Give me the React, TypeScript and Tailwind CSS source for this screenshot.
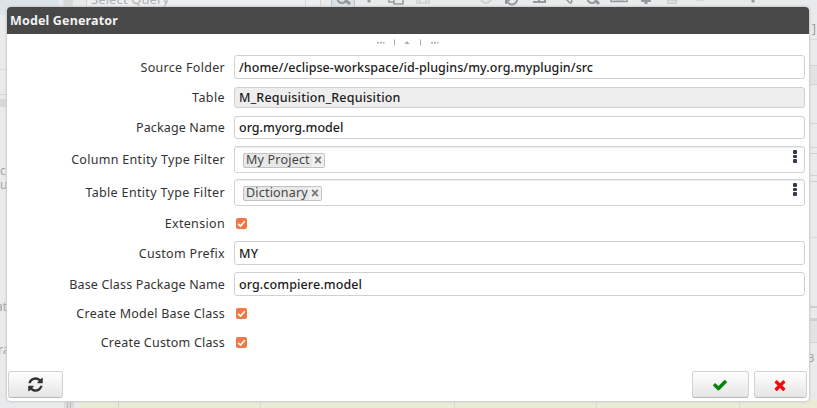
import type { ReactNode } from "react";

const REFRESH =
  "M1511 928q0 5-1 7-64 268-268 434.5t-478 166.5q-146 0-282.5-55t-243.5-157l-129 129q-19 19-45 19t-45-19-19-45v-448q0-26 19-45t45-19h448q26 0 45 19t19 45-19 45l-137 137q71 66 161 102t187 36q134 0 250-65t186-179q11-17 53-117 8-23 30-23h192q13 0 22.5 9.5t9.5 22.5zm25-800v448q0 26-19 45t-45 19h-448q-26 0-45-19t-19-45 19-45l138-138q-148-137-349-137-134 0-250 65t-186 179q-11 17-53 117-8 23-30 23h-199q-13 0-22.5-9.5t-9.5-22.5v-7q65-268 270-434.5t480-166.5q146 0 284 55.5t245 156.5l130-129q19-19 45-19t45 19 19 45z";
const CHECK =
  "M1671 566q0 40-28 68l-724 724-136 136q-28 28-68 28t-68-28l-136-136-362-362q-28-28-28-68t28-68l136-136q28-28 68-28t68 28l294 295 656-657q28-28 68-28t68 28l136 136q28 28 28 68z";
const TIMES =
  "M1490 1322q0 40-28 68l-136 136q-28 28-68 28t-68-28l-294-294-294 294q-28 28-68 28t-68-28l-136-136q-28-28-28-68t28-68l294-294-294-294q-28-28-28-68t28-68l136-136q28-28 68-28t68 28l294 294 294-294q28-28 68-28t68 28l136 136q28 28 28 68t-28 68l-294 294 294 294q28 28 28 68z";

function Glyph({ d, className, box = "0 0 1792 1792" }: { d: string; className: string; box?: string }) {
  return (
    <svg viewBox={box} className={className} fill="currentColor">
      <path d={d} />
    </svg>
  );
}

function Row({ label, className, labelClass, children }: { label: string; className: string; labelClass: string; children: ReactNode }) {
  return (
    <div className={`flex items-center ${className}`}>
      <div className={`w-[218px] shrink-0 whitespace-nowrap pt-[2px] text-right text-[#333] ${labelClass}`}>{label}</div>
      <div className="ml-[9px] flex h-full w-[571px] items-center">{children}</div>
    </div>
  );
}

function Field({ value, className = "bg-white", textClass }: { value: string; className?: string; textClass: string }) {
  return (
    <div className={`flex h-full w-full items-center rounded-[3px] border border-[#d0d0d0] pl-1 pt-[2px] text-[#1c1c1c] ${className}`}>
      <span className={`whitespace-nowrap font-medium ${textClass}`}>{value}</span>
    </div>
  );
}

function Tags({ value, tagClass }: { value: string; tagClass: string }) {
  return (
    <div className="flex h-full w-full items-center justify-between rounded-[3px] border border-[#d2d2d2] bg-white pl-2 shadow-[inset_0_1px_1px_#eeeeee]">
      <div className={`mt-px flex h-[15px] items-center justify-between rounded-[2px] border border-[#c2c2c2] bg-[#e8e8e8] pl-[2px] text-[#444] ${tagClass}`}>
        <span className="whitespace-nowrap pt-px leading-none tracking-[0.2px]">{value}</span>
        <span className="flex h-[13px] w-[12px] items-center justify-center bg-[#f0f0f0]">
          <svg viewBox="0 0 7 7" className="h-[8px] w-[8px]" stroke="#777" strokeWidth="1.5">
            <path d="M1 .8 6 6.2M6 .8 1 6.2" />
          </svg>
        </span>
      </div>
      <div className="flex h-full w-[18px] flex-col items-center gap-[1px] pt-[3px]">
        <i className="h-[3.5px] w-[4px] rounded-[1px] bg-[#333b4d]" />
        <i className="h-[3.5px] w-[4px] rounded-[1px] bg-[#333b4d]" />
        <i className="h-[3.5px] w-[4px] rounded-[1px] bg-[#333b4d]" />
      </div>
    </div>
  );
}

function Checkbox() {
  return (
    <span className="ml-[2px] flex h-[11px] w-[11px] items-center justify-center rounded-[2px] bg-[#f07746]">
      <svg viewBox="0 0 11 11" className="h-[11px] w-[11px]" fill="none" stroke="white" strokeWidth="1.6">
        <path d="M2.2 5.8 4.5 8 8.8 3.2" />
      </svg>
    </span>
  );
}

function Button({ className, children }: { className: string; children: ReactNode }) {
  return (
    <button className={`flex h-[27px] items-center justify-center rounded-[3px] border border-[#d2d2d2] border-b-[#b8b8b8] bg-linear-to-b from-white to-[#e5e5e5] ${className}`}>
      {children}
    </button>
  );
}

function Backdrop() {
  return (
    <div className="flex h-full flex-col bg-[#e9eaeb]">
      <div className="flex h-[15px] shrink-0">
        <div className="w-[59px] bg-[#dde4e9]" />
        <div className="ml-1 w-[10px] border-x border-[#dcdddf] bg-[#d6d7d9]" />
        <div className="ml-[13px] flex h-[7px] w-[235px] overflow-hidden border-x border-[#d3d4d6] bg-[#edeeef] pl-1">
          <div className="mt-[-9px] w-[214px] text-[13px] leading-[16px] tracking-[0.1px] text-[#b0b1b3]">Select Query</div>
          <i className="w-px bg-[#d3d4d6]" />
        </div>
        <svg viewBox="321 0 496 7" className="h-[7px] w-[496px]" fill="none" stroke="#96999c" strokeWidth="2">
          <path d="M331.500 -1V8H354.500V-1" fill="#d9e1e6" stroke="#b9c3cb" strokeWidth="1" />
          <circle cx="342" cy="-1.500" r="4.500" />
          <path d="m345 0 5 4M369 0v2.500M753 0v2.500" strokeWidth="3" />
          <path d="M389-4v6h5M394-1h9v5h-9z" strokeWidth="1.500" />
          <path d="M417-4h12v7h-12zM420 3v-4h6v4" stroke="#d3d4d6" />
          <path d="M481-2a5 5 0 0 0 10 0" stroke="#ced0d2" />
          <path d="M506 4V0h4M507 0a5 5 0 0 0 10-1M533-6h12v8h-12M539-4v6" />
          <path d="m565-2 5 5q3 0 1-4" strokeWidth="1.500" />
          <circle cx="592" cy="-1.500" r="4.500" />
          <path d="m595 0 4 4" strokeWidth="3" />
          <path d="M611-4v5.500h16v-5.500M614-.500h10" strokeWidth="1.500" />
          <path d="M641 0h10M643-2v4M649-2v4M646-2v6" strokeWidth="3" />
          <path d="M667 0h11M668 0v3h8V0" stroke="#ced0d2" />
          <path d="M695 0h9" stroke="#d9dadc" />
        </svg>
      </div>
      <div className="flex grow justify-between">
        <div className="w-[7px] overflow-hidden text-[12px] leading-[14px] text-[#a4a6a9]">
          <div className="h-[55px] border-b border-[#d9dbdd]" />
          <div className="h-[25px] border-b border-[#d5d6d8]" />
          <div className="mt-1 h-[8px] bg-[#d5d7d9]" />
          <div className="mt-[57px]">c</div>
          <div>u</div>
          <div className="ml-[-4px] mt-[108px]">at</div>
          <div className="ml-[-2px] mt-[29px]">ra</div>
        </div>
        <div className="w-[7px] overflow-hidden text-[12px] leading-[14px] text-[#999ca0]">
          <div className="mt-[7px] h-[18px] border-b border-[#d8d9db] pl-[2px]">]</div>
          <div className="h-[26px] border-b border-[#d2d3d5]" />
          <div className="h-[19px] border-b border-[#d2d3d5] bg-[#e2e3e4]" />
          <div className="h-[39px] border-b border-[#d2d3d5]" />
          <div className="h-[24px] border-b border-[#d2d3d5]" />
          <div className="h-[6px] border-b border-[#ced0d2]" />
          <div className="h-[22px] border-b border-[#d2d3d5]" />
          <div className="h-[6px] border-b border-[#ced0d2]" />
          <div className="h-[56px] border-b border-[#d8d9db]" />
          <div className="h-[70px] border-b-2 border-[#ced0d2]" />
          <div className="mt-[10px] h-[3px] bg-[#cfd1d3]" />
          <div className="h-[22px] border-b border-[#d2d3d5] bg-[#e2e3e4]" />
          <div className="ml-[-2px] mt-[8px] text-[11px]">3</div>
        </div>
      </div>
      <div className="flex h-[8px] shrink-0">
        <div className="flex w-[79px] justify-end pr-[5px]">
          <div className="flex w-[10px] justify-center bg-[#d9dadc]"><i className="w-[4px] border-x border-[#b9babc]" /></div>
        </div>
        <div className="w-[40px] border-r border-[#d1d2d4] bg-[#e9ebd7]" />
        <div className="w-[142px] border-r border-[#d7d8e0] bg-[#e9ebd7]" />
        <div className="w-[194px] border-r border-[#d7d8e0] bg-[#e9ebd7]" />
        <div className="w-[142px] border-r border-[#d7d8e0] bg-[#e9ebd7]" />
        <div className="w-[143px] border-r border-[#d7d8e0] bg-[#e9ebd7]" />
        <div className="grow bg-[#e9ebd7]" />
      </div>
    </div>
  );
}

export default function App() {
  return (
    <div className="relative h-[408px] w-[817px] overflow-hidden font-['Noto_Sans','Open_Sans',sans-serif] text-[12.5px] leading-none">
      <Backdrop />
      <div className="absolute left-[7px] top-[7px] flex h-[394px] w-[802px] flex-col rounded-[4px] bg-white shadow-[0_0_2px_1px_#c9cacb]">
        <div className="flex h-[27px] shrink-0 items-center rounded-t-[4px] bg-[#484848] pl-[3px] pt-[2px] text-[12.5px] font-bold tracking-[0.15px] text-[#f2f2f2]">
          <span>Model Generator</span>
        </div>
        <svg viewBox="0 0 64 21" className="ml-[369px] h-[21px] w-[64px] shrink-0" fill="#aaa">
          <path d="M1 8h2v1.500H1zM4 8h2v1.500H4zM7 8h1.500v1.500H7zM18 5.500h1v6h-1zM28.500 10l2.500-3 2.500 3zM44 5.500h1v6h-1zM55 8h2v1.500h-2zM58 8h2v1.500h-2zM61 8h1.500v1.500H61z" />
        </svg>
        <Row label="Source Folder" className="h-[24px]" labelClass="tracking-[0.3px]">
          <Field value="/home//eclipse-workspace/id-plugins/my.org.myplugin/src" textClass="tracking-[0.06px]" />
        </Row>
        <Row label="Table" className="mt-[8px] h-[21px]" labelClass="tracking-[0.4px]">
          <Field value="M_Requisition_Requisition" className="bg-[#eeeeee]" textClass="tracking-[0.2px]" />
        </Row>
        <Row label="Package Name" className="mt-[8px] h-[23px]" labelClass="tracking-[0.12px]">
          <Field value="org.myorg.model" textClass="tracking-[0.02px]" />
        </Row>
        <Row label="Column Entity Type Filter" className="mt-[7px] h-[27px]" labelClass="tracking-[0.3px]">
          <Tags value="My Project" tagClass="w-[82px]" />
        </Row>
        <Row label="Table Entity Type Filter" className="mt-[6px] h-[27px]" labelClass="tracking-[0.34px]">
          <Tags value="Dictionary" tagClass="w-[79px]" />
        </Row>
        <Row label="Extension" className="mt-[12px] h-[11px]" labelClass="tracking-[0.33px]">
          <Checkbox />
        </Row>
        <Row label="Custom Prefix" className="mt-[12px] h-[24px]" labelClass="tracking-[0.3px]">
          <Field value="MY" textClass="tracking-[0.2px]" />
        </Row>
        <Row label="Base Class Package Name" className="mt-[7px] h-[24px]" labelClass="tracking-[0.15px]">
          <Field value="org.compiere.model" textClass="tracking-[0.1px]" />
        </Row>
        <Row label="Create Model Base Class" className="mt-[12px] h-[11px]" labelClass="tracking-[0.23px]">
          <Checkbox />
        </Row>
        <Row label="Create Custom Class" className="mt-[18px] h-[11px]" labelClass="tracking-[0.2px]">
          <Checkbox />
        </Row>
        <div className="mt-auto mb-[3px] flex pl-[1px] pr-[2px]">
          <Button className="mr-auto w-[55px] text-[#333]">
            <Glyph d={REFRESH} className="h-[17px] w-[17px]" box="-128 -128 1792 1792" />
          </Button>
          <Button className="w-[57px] pr-px text-[#0a830a]">
            <Glyph d={CHECK} className="h-[16px] w-[16px]" />
          </Button>
          <Button className="ml-[5px] w-[53px] pr-[2px] text-[#f80808]">
            <Glyph d={TIMES} className="h-[16px] w-[16px]" />
          </Button>
        </div>
      </div>
    </div>
  );
}
